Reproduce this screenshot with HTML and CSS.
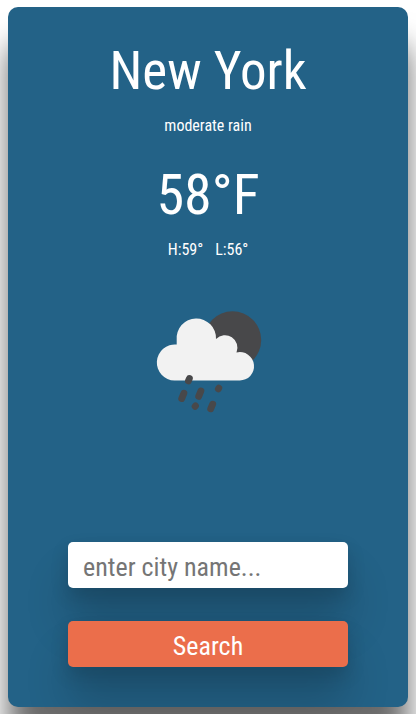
FILE: index.html
```html
<!DOCTYPE html>
<html lang="en">
<head>
<meta charset="utf-8">
<meta name="viewport" content="width=device-width, initial-scale=1">
<title>Weather</title>
<link rel="stylesheet" href="styles.css">
</head>
<body>
<main class="card">
  <h1 class="city">New York</h1>
  <p class="detail">moderate rain</p>
  <p class="temperature">58°F</p>
  <p class="detail range"><span>H:59°</span><span>L:56°</span></p>
  <svg class="icon" viewBox="-2 -1 130 120" aria-hidden="true">
    <circle cx="87.500" cy="40" r="28.700" fill="#48484a"/>
    <path fill="#f2f2f2" d="M29.500 80.500A18 18 0 1 1 31.700 44.600V40A19.700 19.700 0 1 1 71 39A12.500 12.500 0 0 1 91.500 52.500A14.200 14.200 0 1 1 94.500 80.500Z"/>
    <g stroke="#48484a" stroke-width="6.800" stroke-linecap="round">
      <path d="M44.400 78.500l-1 2.400M38.900 93.200l-2.200 5.400M55.900 91l-2.200 5.400M67.700 104.200l-2 4.600M73.800 88.200l-.4 .6M50.500 105.900l-.4 .4"/>
    </g>
  </svg>
  <form class="search">
    <input class="field" type="text" placeholder="enter city name..." aria-label="City name">
    <button class="submit" type="button">Search</button>
  </form>
</main>
</body>
</html>
```

FILE: styles.css
```css
* {
  box-sizing: border-box;
}

body {
  min-height: 100vh;
  margin: 0;
  padding: 7px 8px;
  display: flex;
  justify-content: center;
  background: #fff;
  font-family: "Roboto Condensed", Roboto, sans-serif;
}

.card {
  width: 100%;
  max-width: 400px;
  padding: 32px 20px 40px;
  display: flex;
  flex-direction: column;
  align-items: center;
  border-radius: 10px;
  background: #236287;
  color: #fff;
  box-shadow: 0 38px 30px rgba(0, 0, 0, 0.58);
}

.city,
.temperature {
  margin: 0;
  font-size: 56px;
  font-weight: 400;
  line-height: 64px;
}

.city {
  font-size: 53px;
}

.detail {
  margin: 13px 0 15px;
  font-size: 16px;
  line-height: 20px;
}

.temperature {
  margin-top: 12px;
}

.range {
  display: flex;
  gap: 12px;
}

.icon {
  width: 130px;
  height: 120px;
  margin-top: 24px;
}

.search {
  width: 280px;
  max-width: 100%;
  margin: auto 0 0;
  display: grid;
  gap: 33px;
}

.field,
.submit {
  width: 100%;
  height: 46px;
  padding: 4px 15px 0;
  border: 0;
  border-radius: 5px;
  font: inherit;
  font-size: 26px;
  box-shadow: 0 36px 44px rgba(0, 0, 0, 0.2), 0 8px 18px rgba(0, 0, 0, 0.16);
}

.field {
  background: #fff;
  color: #222;
}

.field::placeholder {
  color: #757575;
}

.submit {
  background: #eb6e4b;
  color: #fff;
}
```
